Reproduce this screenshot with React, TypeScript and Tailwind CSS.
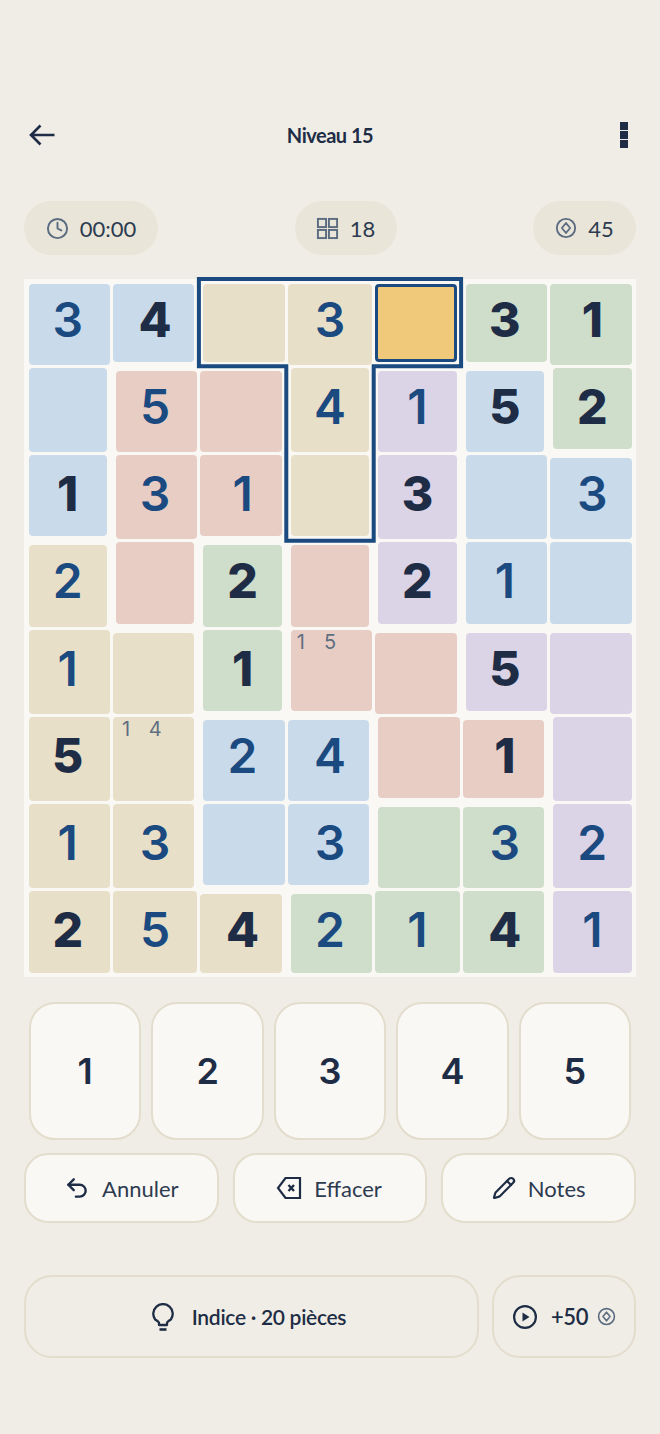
import { FC, ReactNode } from "react";
import { Clock, Undo2, Pencil } from "lucide-react";

const regions = [
  "aabbbcc",
  "addbefc",
  "addbeff",
  "gdhiefF",
  "gghiijj",
  "ggkkiij",
  "ggkkllj",
  "ggglllj",
];

const fills: Record<string, string> = {
  a: "bg-[#c9dbeb]",
  f: "bg-[#c9dbeb]",
  F: "bg-[#c9dbeb]",
  k: "bg-[#c9dbeb]",
  b: "bg-[#e8dfc8]",
  g: "bg-[#e8dfc8]",
  c: "bg-[#cfddcb]",
  h: "bg-[#cfddcb]",
  l: "bg-[#cfddcb]",
  d: "bg-[#e8cdc5]",
  i: "bg-[#e8cdc5]",
  e: "bg-[#dbd3e6]",
  j: "bg-[#dbd3e6]",
};

// B = given (dark), plain = entered by the player
const cells = [
  ["3", "4B", "", "3", "", "3B", "1B"],
  ["", "5", "", "4", "1", "5B", "2B"],
  ["1B", "3", "1", "", "3B", "", "3"],
  ["2", "", "2B", "", "2B", "1", ""],
  ["1", "", "1B", "n15", "", "5B", ""],
  ["5B", "n14", "2", "4", "", "1B", ""],
  ["1", "3", "", "3", "", "3", "2"],
  ["2B", "5", "4B", "2", "1", "4B", "1"],
];

const regionAt = (row: number, col: number) => {
  const key = regions[row]?.[col];
  return key === "F" ? "f" : key;
};

const inset = (row: number, col: number, r2: number, c2: number) =>
  regionAt(row, col) === regionAt(r2, c2) ? "1.5px" : "4.5px";

const Cell: FC<{ row: number; col: number; value: string }> = ({ row, col, value }) => {
  const selected = row === 0 && col === 4;
  const isNotes = value.startsWith("n");
  const given = value.endsWith("B");
  const digit = isNotes ? "" : value.replace("B", "");
  const fill = fills[regions[row][col]];

  return (
    <div className="grid min-w-0 min-h-0">
      <div
        className={`col-start-1 row-start-1 rounded-[4px] ${selected ? "bg-[#f0c97a] border-[3px] border-[#1a4a7f]" : fill}`}
        style={{
          marginTop: inset(row, col, row - 1, col),
          marginBottom: inset(row, col, row + 1, col),
          marginLeft: inset(row, col, row, col - 1),
          marginRight: inset(row, col, row, col + 1),
        }}
      />
      {digit && (
        <span
          className={`col-start-1 row-start-1 place-self-center -translate-y-[3px] font-['Inter',sans-serif] text-[48px] leading-none ${given ? "font-extrabold text-[#1e2d45]" : "font-semibold text-[#1a4a7f]"}`}
        >
          {digit}
        </span>
      )}
      {isNotes && (
        <div className="col-start-1 row-start-1 self-start grid grid-cols-3 h-[28px] font-['Inter',sans-serif] text-[20px] leading-[28px] text-center text-[#5f6f80]">
          <span>{value[1]}</span>
          <span>{value[2]}</span>
        </div>
      )}
    </div>
  );
};

const BackIcon: FC = () => (
  <svg width="26" height="22" viewBox="0 0 26 22" fill="none" stroke="#1e2d45" strokeWidth="2.6" className="ml-[5px]">
    <path d="M2 11h23.500M11.500 1.500 2 11l9.500 9.500" />
  </svg>
);

const BulbIcon: FC = () => (
  <svg width="22" height="28" viewBox="0 0 22 28" fill="none" stroke="#1e2d45" strokeWidth="2.3">
    <path d="M7 22v-2c0-1.500-2-2.500-3.840-3.500A9.700 9.700 0 1 1 18.840 16.500C17 17.500 15 18.500 15 20v2Z" strokeLinejoin="round" />
    <path d="M7.500 26.500h7" strokeWidth="2.600" />
  </svg>
);

const CoinIcon: FC<{ size: number; className?: string }> = ({ size, className }) => (
  <svg width={size} height={size} viewBox="0 0 24 24" fill="none" stroke="currentColor" strokeWidth="2" className={className}>
    <circle cx="12" cy="12" r="10" />
    <path d="M12 6.500 16.500 12 12 17.500 7.500 12Z" strokeLinejoin="round" />
  </svg>
);

const GridIcon: FC = () => (
  <svg width="23" height="23" viewBox="0 0 24 24" fill="none" stroke="#5b6b80" strokeWidth="2">
    <rect x="2" y="2" width="8.500" height="8.500" />
    <rect x="13.500" y="2" width="8.500" height="8.500" />
    <rect x="2" y="13.500" width="8.500" height="8.500" />
    <rect x="13.500" y="13.500" width="8.500" height="8.500" />
  </svg>
);

const BackspaceIcon: FC = () => (
  <svg width="26" height="26" viewBox="0 0 26 26" fill="none" stroke="#1e2d45" strokeWidth="2.2" className="-ml-[2px]">
    <path d="M24 3H9.500L2 13l7.500 10H24Z" strokeLinejoin="miter" />
    <path d="m12.500 10 5.500 6M18 10l-5.500 6" strokeWidth="2.400" />
  </svg>
);

const PlayIcon: FC = () => (
  <svg width="26" height="26" viewBox="0 0 26 26" fill="none" stroke="#1e2d45" strokeWidth="2.2">
    <circle cx="13" cy="13" r="10.900" />
    <path d="M10.500 8.500 17.500 13l-7 4.500Z" fill="#1e2d45" stroke="none" />
  </svg>
);

const Pill: FC<{ icon: ReactNode; label: string; className: string }> = ({ icon, label, className }) => (
  <div className={`h-[54px] rounded-full bg-[#e9e5d9] flex items-center justify-center gap-[11px] text-[22px] text-[#2d3b50] ${className}`}>
    {icon}
    <span>{label}</span>
  </div>
);

const ActionButton: FC<{ icon: ReactNode; label: string }> = ({ icon, label }) => (
  <button type="button" className="flex-1 h-[70px] rounded-[24px] border-2 border-[#e3ddcd] bg-[#faf8f4] flex items-center justify-center gap-[12px] text-[22px] text-[#2d3b50]">
    {icon}
    <span>{label}</span>
  </button>
);

export default function App() {
  return (
    <div className="h-[1434px] bg-[#f0ede6] px-[24px] pt-[112px] font-['Lato',sans-serif] text-[#1e2d45] overflow-hidden">
      <header className="h-[46px] grid grid-cols-[1fr_auto_1fr] items-center">
        <BackIcon />
        <h1 className="text-[20px] font-bold tracking-[-0.5px]">Niveau 15</h1>
        <div className="justify-self-end flex flex-col gap-[1px] mr-[8px]">
          <span className="w-[8px] h-[8px] bg-[#1e2d45]" />
          <span className="w-[8px] h-[8px] bg-[#1e2d45]" />
          <span className="w-[8px] h-[8px] bg-[#1e2d45]" />
        </div>
      </header>

      <div className="mt-[43px] flex justify-between">
        <Pill className="w-[134px]" icon={<Clock size={23} strokeWidth={2} className="text-[#5b6b80]" />} label="00:00" />
        <Pill className="w-[102px]" icon={<GridIcon />} label="18" />
        <Pill className="w-[103px]" icon={<CoinIcon size={22} className="text-[#5b6b80]" />} label="45" />
      </div>

      <div className="relative mt-[24px] h-[698px] bg-[#faf8f4] grid grid-cols-7 grid-rows-8">
        {cells.map((row, r) =>
          row.map((value, c) => <Cell key={`${r}-${c}`} row={r} col={c} value={value} />)
        )}
        <svg className="absolute inset-0 overflow-visible pointer-events-none" width="612" height="698" fill="none">
          <path
            d="M174.900 0H437.100V87.250H349.700V261.750H262.300V87.250H174.900Z"
            stroke="#1a4a7f"
            strokeWidth="4"
          />
        </svg>
      </div>

      <div className="mt-[25px] px-[5px] flex gap-[10px]">
        {[1, 2, 3, 4, 5].map(n => (
          <button
            key={n}
            type="button"
            className="flex-1 h-[138px] rounded-[26px] border-2 border-[#e3ddcd] bg-[#faf8f4] font-['Inter',sans-serif] text-[36px] font-semibold text-[#1e2d45]"
          >
            {n}
          </button>
        ))}
      </div>

      <div className="mt-[13px] flex gap-[14px]">
        <ActionButton icon={<Undo2 size={26} strokeWidth={2.200} className="text-[#1e2d45]" />} label="Annuler" />
        <ActionButton icon={<BackspaceIcon />} label="Effacer" />
        <ActionButton icon={<Pencil size={24} strokeWidth={2.200} className="text-[#1e2d45]" />} label="Notes" />
      </div>

      <div className="mt-[52px] flex gap-[13px]">
        <button type="button" className="flex-1 h-[83px] pr-[5px] rounded-[28px] border-2 border-[#e3ddcd] flex items-center justify-center gap-[18px] text-[21px] font-semibold tracking-[-0.3px] text-[#1e2d45]">
          <BulbIcon />
          <span>Indice · 20 pièces</span>
        </button>
        <button type="button" className="w-[144px] h-[83px] rounded-[28px] border-2 border-[#e3ddcd] flex items-center justify-center gap-[13px] text-[22px] font-semibold tracking-[-0.5px] text-[#1e2d45]">
          <PlayIcon />
          <span className="flex items-center gap-[9px]">
            +50
            <CoinIcon size={19} className="text-[#5b6b80]" />
          </span>
        </button>
      </div>
    </div>
  );
}
